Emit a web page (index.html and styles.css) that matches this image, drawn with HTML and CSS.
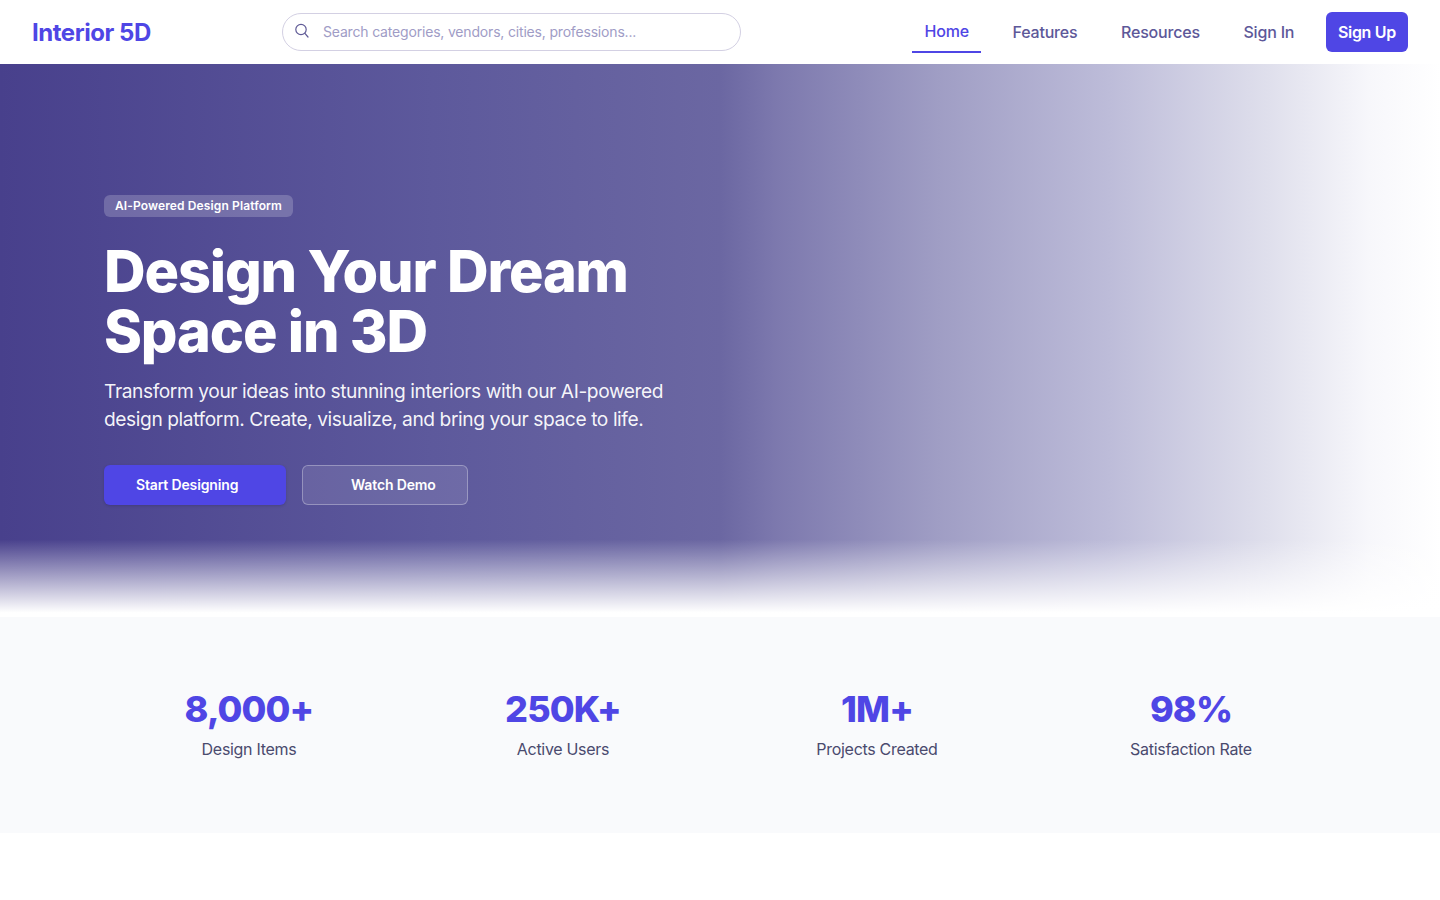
FILE: index.html
```html
<!DOCTYPE html>
<html lang="en">
<head>
<meta charset="utf-8">
<title>Interior 5D</title>
<link rel="stylesheet" href="styles.css">
</head>
<body>
<header class="nav">
  <a class="logo" href="#">Interior 5D</a>
  <label class="search">
    <svg class="search-icon" viewBox="0 0 16 16" width="16" height="16" fill="none" stroke="currentColor" stroke-width="1.2" stroke-linecap="round"><circle cx="7" cy="6.5" r="5.2"/><path d="M10.9 10.4 14 14"/></svg>
    <input class="search-input" type="text" placeholder="Search categories, vendors, cities, professions...">
  </label>
  <nav class="links">
    <a class="link active" href="#">Home</a>
    <a class="link" href="#">Features</a>
    <a class="link" href="#">Resources</a>
    <a class="link" href="#">Sign In</a>
    <a class="signup" href="#">Sign Up</a>
  </nav>
</header>
<section class="hero">
  <div class="hero-content">
    <span class="badge">AI-Powered Design Platform</span>
    <h1 class="title">Design Your Dream<br>Space in 3D</h1>
    <p class="lead">Transform your ideas into stunning interiors with our AI-powered design platform. Create, visualize, and bring your space to life.</p>
    <div class="actions">
      <a class="btn btn-primary" href="#">Start Designing<span class="btn-slot"></span></a>
      <a class="btn btn-ghost" href="#"><span class="btn-slot"></span>Watch Demo</a>
    </div>
  </div>
</section>
<section class="stats">
  <div class="stats-grid">
    <div class="stat"><div class="stat-num">8,000+</div><div class="stat-label">Design Items</div></div>
    <div class="stat"><div class="stat-num">250K+</div><div class="stat-label">Active Users</div></div>
    <div class="stat"><div class="stat-num">1M+</div><div class="stat-label">Projects Created</div></div>
    <div class="stat"><div class="stat-num">98%</div><div class="stat-label">Satisfaction Rate</div></div>
  </div>
</section>
</body>
</html>
```
FILE: styles.css
```css
* { box-sizing: border-box; }
html, body { margin: 0; padding: 0; background: #fff; }
body { font-family: Inter, "Noto Sans", sans-serif; min-height: 900px; overflow: hidden; }
a { text-decoration: none; }

.nav { height: 64px; display: flex; align-items: center; padding: 0 32px; background: #fff; }
.logo { font-size: 24px; font-weight: 700; color: #4f46e5; letter-spacing: -0.46px; width: 250px; flex: none; }
.search { width: 459px; height: 38px; flex: none; display: flex; align-items: center; gap: 13px; padding: 0 12px 0 11px; border: 1px solid #d3d0e3; border-radius: 19px; color: #5f5a96; }
.search-icon { flex: none; margin-top: -3px; }
.search-input { flex: 1; min-width: 0; border: 0; outline: 0; background: transparent; font: 400 14px Inter, sans-serif; letter-spacing: -0.18px; color: #5f5a96; padding: 0 0 2px; }
.search-input::placeholder { color: #a09cc6; opacity: 1; }
.links { margin-left: auto; height: 40px; display: flex; align-items: flex-start; gap: 19.67px; }
.link { height: 40px; padding: 0 12px; display: flex; align-items: center; font-size: 16px; font-weight: 500; letter-spacing: -0.2px; color: #5d5899; white-space: nowrap; }
.link.active { height: 41px; padding-bottom: 2px; color: #4f46e5; border-bottom: 2px solid #4f46e5; }
.signup { height: 40px; padding: 0 12px; display: flex; align-items: center; font-size: 16px; font-weight: 600; letter-spacing: -0.3px; color: #fff; background: #4f46e5; border-radius: 6px; white-space: nowrap; }

.hero { height: 553px; padding: 131px 104px 0; color: #fff;
  background:
    linear-gradient(to top, #fff 0.8%, rgba(255,255,255,0) 14%),
    linear-gradient(to right, #48408c 0%, #5d599c 30%, #6b67a2 50%, #7d79ae 54%, #9f9dc4 65%, #bdbcd9 77%, #dfdfec 88%, #f7f7fb 95%, #fff 100%);
}
.hero-content { width: 580px; }
.badge { display: inline-block; height: 22px; line-height: 22px; padding: 0 11px; font-size: 12px; font-weight: 600; letter-spacing: 0.12px; border-radius: 6px; background: rgba(255,255,255,0.2); vertical-align: top; }
.title { margin: 24px 0 0; font-size: 57.6px; line-height: 60px; font-weight: 800; letter-spacing: -1.15px; white-space: nowrap; }
.lead { margin: 16px 0 0; font-size: 19.2px; line-height: 28px; color: rgba(255,255,255,0.95); letter-spacing: -0.42px; }
.actions { display: flex; gap: 16px; margin-top: 32px; }
.btn { height: 40px; padding: 0 32px 2px; display: flex; align-items: center; border-radius: 6px; font-size: 14px; font-weight: 600; letter-spacing: -0.15px; color: #fff; white-space: nowrap; }
.btn-slot { width: 16px; flex: none; }
.btn-primary { background: #4f46e5; width: 182px; box-shadow: 0 1px 3px rgba(0,0,0,0.15); }
.btn-ghost { background: rgba(255,255,255,0.1); border: 1px solid rgba(255,255,255,0.3); width: 166px; }

.stats { background: #f9fafc; height: 216px; padding-top: 64px; }
.stats-grid { width: 1224px; margin: 0 auto; display: grid; grid-template-columns: repeat(4, 1fr); gap: 32px; text-align: center; }
.stat-num { font-size: 36px; line-height: 56px; font-weight: 800; letter-spacing: -0.9px; color: #4f46e5; }
.stat-label { font-size: 16px; line-height: 24px; letter-spacing: -0.3px; color: #4a4a6e; }
```
